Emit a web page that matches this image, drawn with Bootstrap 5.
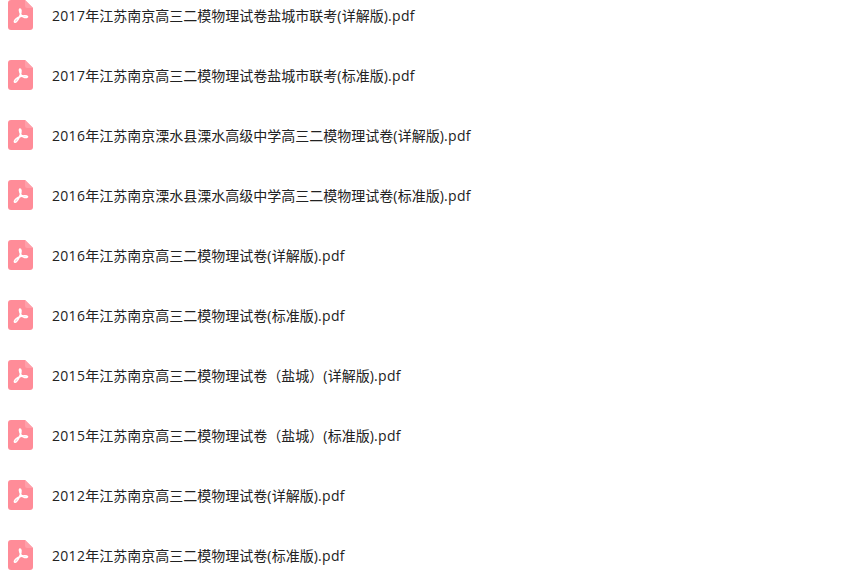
<!DOCTYPE html>
<html lang="zh-CN">
<head>
  <meta charset="utf-8" />
  <meta name="viewport" content="width=device-width, initial-scale=1" />
  <title>文件列表</title>
  <link href="https://cdn.jsdelivr.net/npm/bootstrap@5.3.3/dist/css/bootstrap.min.css" rel="stylesheet" />
  <style>
    html, body { height: 571px; overflow: hidden; background: #fff; }
    .file-list { padding-left: 8px; margin-top: 0; }
    .file-row { height: 60px; color: #222; font: 14px/20px "Open Sans", "Noto Sans CJK SC", sans-serif; padding-top: 6px; gap: 19px; }
    .file-row:last-child { height: 31px; }
    .file-ico { width: 25px; height: 30px; flex: none; margin-top: -6px; filter: blur(.4px); }
    .latin { letter-spacing: .3px; }
  </style>
</head>
<body>
  <div class="file-list" id="list"></div>

  <script>
    const files = [
      '2017年江苏南京高三二模物理试卷盐城市联考(详解版).pdf',
      '2017年江苏南京高三二模物理试卷盐城市联考(标准版).pdf',
      '2016年江苏南京溧水县溧水高级中学高三二模物理试卷(详解版).pdf',
      '2016年江苏南京溧水县溧水高级中学高三二模物理试卷(标准版).pdf',
      '2016年江苏南京高三二模物理试卷(详解版).pdf',
      '2016年江苏南京高三二模物理试卷(标准版).pdf',
      '2015年江苏南京高三二模物理试卷（盐城）(详解版).pdf',
      '2015年江苏南京高三二模物理试卷（盐城）(标准版).pdf',
      '2012年江苏南京高三二模物理试卷(详解版).pdf',
      '2012年江苏南京高三二模物理试卷(标准版).pdf'
    ];
    const ico = '<svg class="file-ico" viewBox="0 0 25 30">' +
      '<path d="M3 0H17L25 8V27a3 3 0 0 1-3 3H3a3 3 0 0 1-3-3V3a3 3 0 0 1 3-3Z" fill="#ff8c98"/>' +
      '<path d="M17 0L25 8H19a2 2 0 0 1-2-2Z" fill="#ff9fa9"/>' +
      '<path d="M12 9C11 9 11.500 12 12.500 14C13.500 16 15 17.300 16.500 17.500C18 17.700 20 17.500 19.500 16.500C19 15.500 15 15.500 12.500 16.500C10 17.500 7.500 18.500 6.500 21C6 22.500 7.500 22.500 8.500 21.500C10.500 19.500 13.500 13 13 10.500C12.800 9.500 12.500 9 12 9Z" fill="none" stroke="#fff" stroke-width="1.500"/></svg>';
    document.getElementById('list').innerHTML = files.map(f =>
      '<div class="file-row d-flex align-items-start">' + ico + '<span>' +
      f.replace(/[\x20-\x7e]+/g, m => '<span class="latin">' + m + '</span>') + '</span></div>').join('');
  </script>
  <script src="https://cdn.jsdelivr.net/npm/bootstrap@5.3.3/dist/js/bootstrap.bundle.min.js"></script>
</body>
</html>
